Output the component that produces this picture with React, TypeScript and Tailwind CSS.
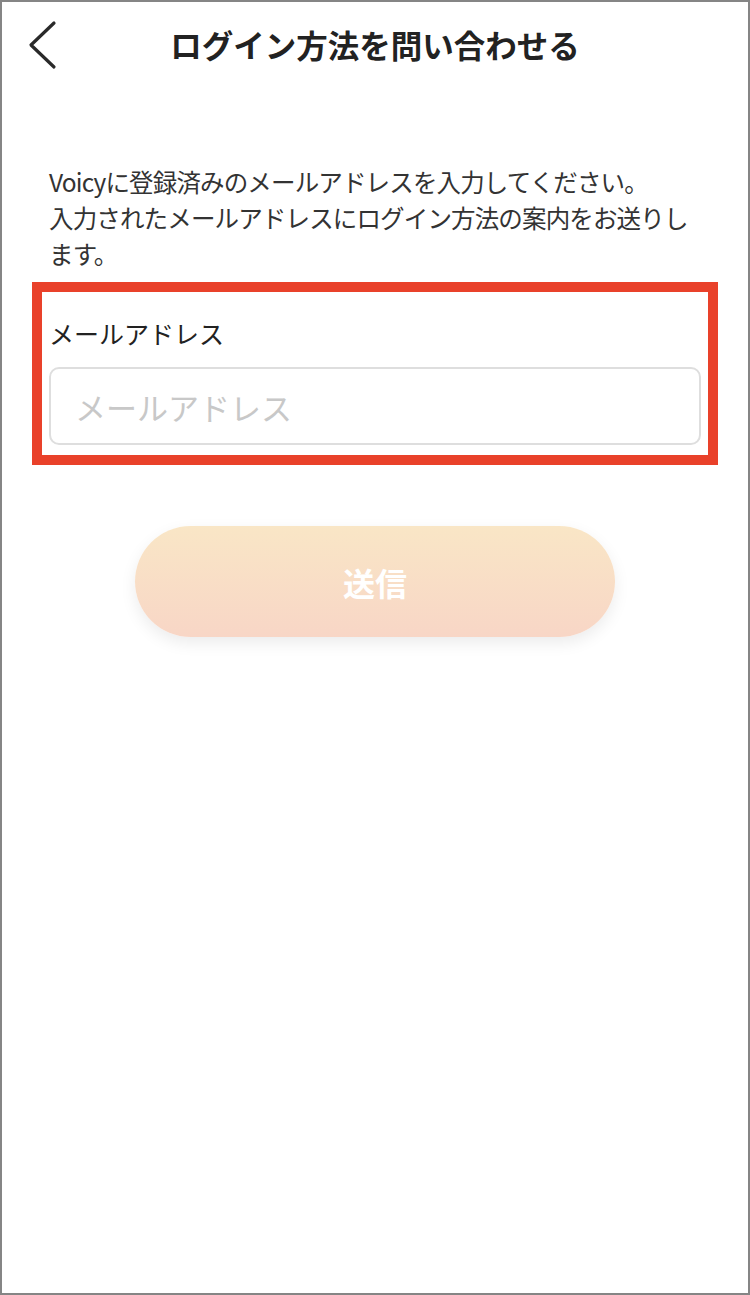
import React from "react";

export default function App() {
  return (
    <div
      className="w-[750px] h-[1295px] border-2 border-[#858585] bg-white flex flex-col"
      style={{ fontFamily: '"Noto Sans CJK JP", "Noto Sans", sans-serif' }}
    >
      <header className="h-[86px] grid grid-cols-[1fr_auto_1fr] items-center">
        <div className="flex items-center pl-[24px]">
          <svg width="34" height="50" viewBox="0 0 34 50" fill="none">
            <path
              d="M28 3 L5 25 L28 47"
              stroke="#2a2a2a"
              strokeWidth="3.2"
              strokeLinecap="round"
              strokeLinejoin="round"
            />
          </svg>
        </div>
        <h1 className="text-[31.5px] font-bold text-[#222] leading-none">
          ログイン方法を問い合わせる
        </h1>
        <div />
      </header>

      <main className="flex flex-col px-[30px]">
        <p className="mt-[76px] pl-[17px] text-[24.5px] leading-[36px] tracking-[-0.85px] text-[#333] whitespace-nowrap">
          Voicyに登録済みのメールアドレスを入力してください。
          <br />
          入力されたメールアドレスにログイン方法の案内をお送りし
          <br />
          ます。
        </p>

        <div className="mt-[10px] border-[10px] border-[#e9412a] px-[7px] pt-[23px] pb-[10px] flex flex-col">
          <label className="text-[25px] leading-[36px] text-[#222]">メールアドレス</label>
          <input
            type="email"
            placeholder="メールアドレス"
            className="mt-[16px] h-[78px] w-full rounded-[10px] border-2 border-[#dedede] px-[24px] text-[31px] text-[#333] placeholder:text-[#c8c8c8] outline-none"
            style={{ fontFamily: '"Noto Sans CJK JP", "Noto Sans", sans-serif' }}
          />
        </div>

        <div className="mt-[61px] flex justify-center">
          <button className="w-[480px] h-[111px] rounded-full bg-gradient-to-b from-[#f9e6c6] to-[#f8d6c6] shadow-[0_6px_16px_rgba(0,0,0,0.08)] text-white text-[32px] font-bold flex items-center justify-center">
            送信
          </button>
        </div>
      </main>
    </div>
  );
}
